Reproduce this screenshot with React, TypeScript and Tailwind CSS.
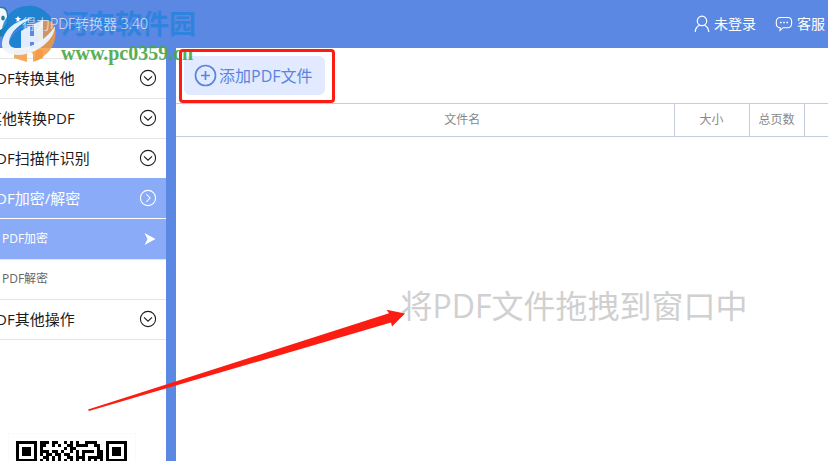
import React from 'react';

const QR_ROWS = [
  '1111111011101100101010011110001111111',
  '1000001011001010011011110011001000001',
  '1011101010000000101100000001001011101',
  '1011101011101101001010111101101011101',
  '1011101010110110110010100001101011101',
  '1000001001101010011011101111101000001',
  '1111111010101010101010101010101111111',
  '0000000011001011100101110110100000000',
];

const Chevron: React.FC<{ right?: boolean }> = ({ right }) => (
  <svg width="18" height="18" viewBox="0 0 18 18" fill="none" stroke="currentColor" strokeWidth="1.1">
    <circle cx="9" cy="9" r="7.6" />
    {right ? <path d="M7.3 5 11 9l-3.7 4" /> : <path d="m5 7.4 4 3.8 4-3.8" />}
  </svg>
);

const MenuItem: React.FC<{ label: string; active?: boolean }> = ({ label, active }) => (
  <li className={active ? 'border-t border-[#8aabf8] bg-[#8aabf8] text-white' : 'border-t border-[#e4e4e4] text-[#1c1c1c]'}>
    <button type="button" className="-ml-[13px] flex h-[39px] w-[calc(100%+13px)] items-center justify-between pr-[9px] pb-px text-[15px] whitespace-nowrap">
      {label}
      <Chevron right={active} />
    </button>
  </li>
);

const Sidebar: React.FC = () => (
  <aside className="flex w-44 shrink-0 flex-col overflow-hidden border-r-[10px] border-[#5b88e3] bg-white pt-[10px]">
    <ul>
      <MenuItem label="PDF转换其他" />
      <MenuItem label="其他转换PDF" />
      <MenuItem label="PDF扫描件识别" />
      <MenuItem label="PDF加密/解密" active />
      <li className="border-t border-white bg-[#8aabf8] text-white">
        <button type="button" className="flex h-10 w-full items-center justify-between pr-[10px] pl-0.5 text-xs">
          PDF加密
          <svg width="12" height="12" viewBox="0 0 12 12" fill="currentColor">
            <path d="M0.5 0 11.5 6 0.5 12 3.5 6Z" />
          </svg>
        </button>
      </li>
      <li className="border-t border-[#e4e4e4] text-[#666]">
        <button type="button" className="flex h-[39px] w-full items-center pb-px pl-0.5 text-xs">PDF解密</button>
      </li>
      <MenuItem label="PDF其他操作" />
    </ul>

    {/* QR code */}
    <div className="border-t border-[#e4e4e4] pt-[93px] pl-2">
      <div className="w-32 border border-[#fafafa] p-[7px]">
        <svg width="111" height="111" viewBox="0 0 37 37" shapeRendering="crispEdges">
          {QR_ROWS.map((row, y) =>
            row.split('').map((cell, x) => cell === '1' && <rect key={`${x}-${y}`} x={x} y={y} width="1" height="1" />),
          )}
        </svg>
      </div>
    </div>
  </aside>
);

const Header: React.FC = () => (
  <header className="flex h-12 shrink-0 items-center overflow-hidden bg-[#5b88e3] pr-[3px] text-white">
    <svg className="shrink-0" width="22" height="48" viewBox="0 0 22 48">
      <path d="M0 7c5-1 8 2 8 9v7c0 7-4 12-8 14Z" fill="#1d7f9c" />
      <path d="M0 8c5 0 7 3 7 9 1 6-2 11-7 13Z" fill="#f4f8fa" />
      <ellipse cx="3" cy="18" rx="1.8" ry="2.6" fill="#1d7f9c" />
    </svg>
    <h1 className="relative z-10 text-sm font-light whitespace-nowrap text-white/80">得力PDF转换器 3.40</h1>
    <nav className="ml-auto flex items-center gap-[19px] text-sm whitespace-nowrap">
      <a href="#login" className="flex items-center gap-1">
        <svg width="16" height="18" viewBox="0 0 16 18" fill="none" stroke="currentColor" strokeWidth="1.2">
          <circle cx="8" cy="5.9" r="4.7" />
          <path d="M1.2 17c.2-3.3 1.6-5.4 4.2-6.7M14.8 17c-.2-3.3-1.6-5.4-4.2-6.7" />
        </svg>
        未登录
      </a>
      <a href="#service" className="flex items-center gap-1">
        <svg width="18" height="16" viewBox="0 0 18 16" fill="none" stroke="currentColor" strokeWidth="1.1">
          <path d="M5.4 1.5h7.2c2.5 0 4 1.6 4 3.8v2.4c0 2.5-1.5 4-4 4H8.2L5 14.5l.3-2.8c-2.5 0-4-1.5-4-4V5.3c0-2.2 1.5-3.8 4.1-3.8Z" />
          <path d="M5 6.5h1.6M8.2 6.5h1.6M11.4 6.5H13" strokeWidth="1.6" />
        </svg>
        客服
      </a>
    </nav>
  </header>
);

const Watermark: React.FC = () => (
  <div className="pointer-events-none absolute top-1 left-0 flex items-start gap-1 whitespace-nowrap">
    <svg width="57" height="60" viewBox="0 0 57 60">
      <path d="M2 32A27 27 0 0 1 54 19C44 12 18 18 4 40Z" fill="#1682cf" opacity="0.85" />
      <path d="M55 24c3 14-6 28-20 33l1-15c9-4 15-10 19-18Z" fill="#f5993f" opacity="0.85" />
      <path d="M42 17c8-1 12 1 12 5-2 8-8 14-16 18V20Z" fill="#f5993f" opacity="0.75" />
      <path d="M14 46h29v8l-10 4v-7c0-4-6-4-6 0v7l-13-4Z" fill="#f5993f" opacity="0.85" />
      <path d="M9 38c3-7 8-12 14-15v19c-7 4-13 2-14-4Z" fill="#1682cf" opacity="0.85" />
      <path d="M21 27l9-5v10h4V20l9-4v23l-9 4v-5h-4v7h-9Z" fill="#eef4fc" opacity="0.92" />
      <path d="M2 39C4 24 18 15 33 14 20 19 10 28 9 38c0 5 5 7 12 6 15-1 28-12 34-22 0 13-17 28-36 29C8 51 1 47 2 39Z" fill="#eef4fc" opacity="0.95" />
      <path d="m18 12 1 2h2l-2 2 1 2-2-1-2 1 1-2-2-2h2Z" fill="#fff" />
    </svg>
    <div className="flex flex-col">
      <span className="text-[27px] leading-[39px] font-bold text-[#2583dd] opacity-80">河东软件园</span>
      <span className="font-['Liberation_Serif',serif] text-[20px] leading-[21px] font-bold text-[#48a746] opacity-90">www.pc0359.cn</span>
    </div>
  </div>
);

const App: React.FC = () => {
  return (
    <div className="relative flex h-screen flex-col overflow-hidden bg-white font-['Open_Sans','Noto_Sans_CJK_SC',sans-serif]">
      <Header />
      <div className="flex min-h-0 flex-1">
        <Sidebar />
        <main className="flex min-w-0 flex-1 flex-col">
          <div className="flex h-[55px] shrink-0 items-start pt-2 pl-2">
            <button type="button" className="flex h-[39px] items-center gap-0.5 rounded-md bg-[#e1eafe] pr-3 pl-[10px] text-base whitespace-nowrap text-[#5b84e0]">
              <svg width="23" height="23" viewBox="0 0 23 23" fill="none" stroke="currentColor" strokeWidth="1.7">
                <circle cx="11.5" cy="11.5" r="10" />
                <path d="M11.5 7v9M7 11.5h9" />
              </svg>
              添加PDF文件
            </button>
          </div>
          <table className="w-full table-fixed border-collapse text-xs text-[#888]">
            <thead>
              <tr className="h-[33px] border-y border-[#c4cddb]">
                <th className="pl-[75px] font-normal">文件名</th>
                <th className="w-[75px] border-l border-[#c4cddb] font-normal">大小</th>
                <th className="w-[55px] border-x border-[#c4cddb] font-normal">总页数</th>
                <th className="w-6"></th>
              </tr>
            </thead>
          </table>
          <p className="pt-36 pl-36 text-center text-[32px] leading-[50px] whitespace-nowrap text-[#d0d0d0]">
            将PDF文件拖拽到窗口中
          </p>
        </main>
      </div>

      <Watermark />

      {/* Tutorial marks */}
      <div className="pointer-events-none absolute top-[49px] left-[179px] h-[54px] w-[156px] rounded-sm border-3 border-[#fc1d12]" />
      <svg className="pointer-events-none absolute top-[300px] left-20" width="330" height="120" viewBox="80 300 330 120">
        <path d="M88 409.5 389 313.2 386.5 309.8 405 313.5 392 326.5 391 322.6 89 411Z" fill="#fc1d12" />
      </svg>
    </div>
  );
};

export default App;
